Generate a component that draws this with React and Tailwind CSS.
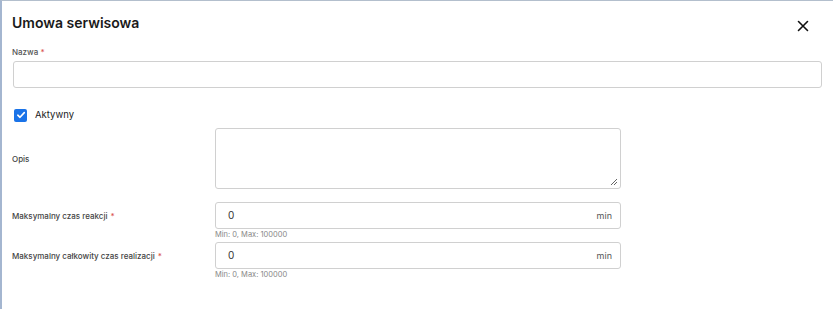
export default function App() {
  return (
    <div className="w-[833px] h-[309px] bg-white border-l-2 border-t border-l-[#a4b6d0] border-t-[#b3bfcd] font-['Inter',sans-serif] text-[#222] overflow-hidden">
      <div className="pl-[10px] pr-[10px]">
        <div className="flex items-center justify-between h-[43px]">
          <div className="text-[14px] font-semibold text-[#1a1a1a]">Umowa serwisowa</div>
          <svg width="12" height="12" viewBox="0 0 12 12" className="mr-[14px] mt-[6px]">
            <path d="M1.5 1.5 L10.5 10.5 M10.5 1.5 L1.5 10.5" stroke="#111" strokeWidth="1.6" strokeLinecap="round" />
          </svg>
        </div>
        <div className="text-[8px] text-[#555] h-[17px] leading-[17px] font-medium">
          Nazwa <span className="text-[#d9534f]">*</span>
        </div>
        <div className="ml-[1px] w-[809px] h-[27px] border border-[#d0d0d0] rounded-[3px]"></div>
        <div className="flex items-center h-[14px] mt-[20px] ml-[2px] gap-[8px]">
          <div className="w-[13px] h-[13px] rounded-[2px] bg-[#1a73e8] flex items-center justify-center">
            <svg width="10" height="10" viewBox="0 0 10 10">
              <path d="M1.8 5.2 L4 7.3 L8.3 2.6" stroke="white" strokeWidth="1.6" fill="none" strokeLinecap="round" strokeLinejoin="round" />
            </svg>
          </div>
          <span className="text-[9.5px] text-[#222]">Aktywny</span>
        </div>
        <div className="grid grid-cols-[203px_406px] mt-[6px]">
          <div className="flex items-center text-[8px] text-[#444] h-[61px] font-medium">Opis</div>
          <div className="relative h-[61px] border border-[#d0d0d0] rounded-[3px]">
            <svg width="8" height="8" viewBox="0 0 8 8" className="absolute right-[2px] bottom-[2px]">
              <path d="M7 1 L1 7 M7 4 L4 7" stroke="#555" strokeWidth="0.9" />
            </svg>
          </div>

          <div className="flex items-center text-[8px] text-[#444] h-[27px] mt-[13px] font-medium">
            Maksymalny czas reakcji <span className="text-[#d9534f] ml-[3px]">*</span>
          </div>
          <div className="mt-[13px] h-[27px] border border-[#d0d0d0] rounded-[3px] flex items-center justify-between px-[12px] pr-[8px] text-[10px] text-[#333]">
            <span>0</span>
            <span className="text-[#555] text-[9px]">min</span>
          </div>
          <div></div>
          <div className="text-[7.5px] text-[#888] h-[13px] leading-[12px]">Min: 0, Max: 100000</div>

          <div className="flex items-center text-[8px] text-[#444] h-[27px] font-medium">
            Maksymalny całkowity czas realizacji <span className="text-[#d9534f] ml-[3px]">*</span>
          </div>
          <div className="h-[27px] border border-[#d0d0d0] rounded-[3px] flex items-center justify-between px-[12px] pr-[8px] text-[10px] text-[#333]">
            <span>0</span>
            <span className="text-[#555] text-[9px]">min</span>
          </div>
          <div></div>
          <div className="text-[7.5px] text-[#888] h-[13px] leading-[12px]">Min: 0, Max: 100000</div>
        </div>
      </div>
    </div>
  );
}
